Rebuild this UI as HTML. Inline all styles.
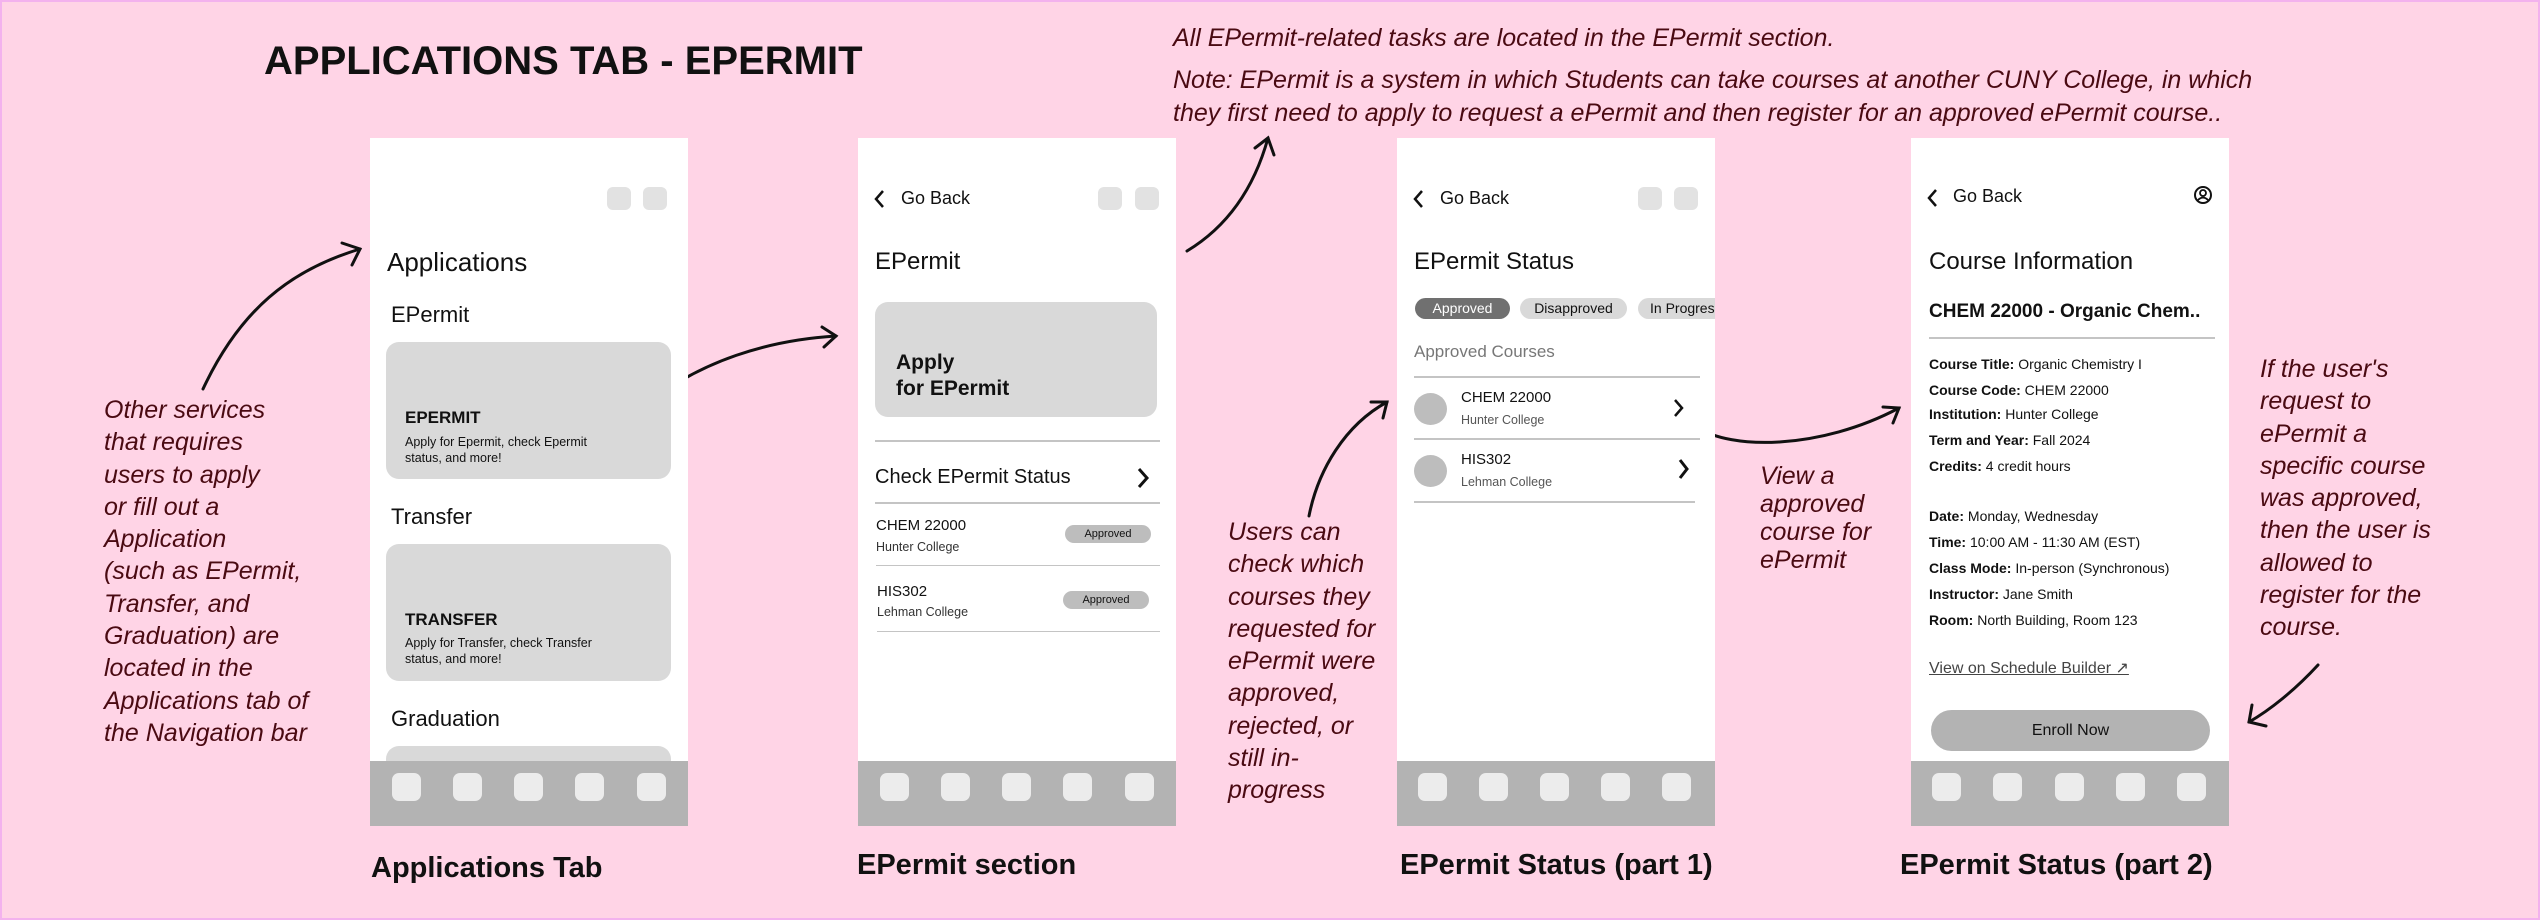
<!DOCTYPE html>
<html><head><meta charset="utf-8"><style>
*{margin:0;padding:0;box-sizing:border-box}
body{width:2540px;height:920px;background:#ffd4e6;position:relative;overflow:hidden;font-family:"Liberation Sans",sans-serif;color:#111;border:2px solid #f3b2ee}
.a{position:absolute;white-space:nowrap}
.note{position:absolute;font-family:"Liberation Sans Narrow","Liberation Sans",sans-serif;font-style:italic;color:#4a0a12;font-size:25px;line-height:32.3px;white-space:nowrap}
.ph{position:absolute;top:136px;width:318px;height:688px;background:#fff;overflow:hidden}
.nav{position:absolute;left:0;bottom:0;width:100%;height:65px;background:#b3b3b3}
.nav i{position:absolute;top:12px;width:29px;height:28px;background:#ececec;border-radius:7px}
.sq{position:absolute;top:49px;width:24px;height:23px;background:#e2e2e2;border-radius:6px}
.card{position:absolute;background:#d9d9d9;border-radius:13px}
.hr{position:absolute;height:2px;background:#c4c4c4}
.pill{position:absolute;background:#bdbdbd;border-radius:10px;font-size:11px;text-align:center;line-height:18px}
.cap{position:absolute;top:850px;font-size:29px;font-weight:700}
.chev{position:absolute}
.d{position:absolute;left:18px;font-size:14px}
.d b{font-weight:600}
</style></head><body>
<div class="a" style="left:262px;top:37px;font-size:40px;font-weight:700">APPLICATIONS TAB - EPERMIT</div>

<div class="note" style="left:1171px;top:20px">All EPermit-related tasks are located in the EPermit section.</div>
<div class="note" style="left:1171px;top:62px;line-height:33px">Note: EPermit is a system in which Students can take courses at another CUNY College, in which<br>they first need to apply to request a ePermit and then register for an approved ePermit course..</div>

<div class="note" style="left:102px;top:392px">Other services<br>that requires<br>users to apply<br>or fill out a<br>Application<br>(such as EPermit,<br>Transfer, and<br>Graduation) are<br>located in the<br>Applications tab of<br>the Navigation bar</div>
<div class="note" style="left:1226px;top:514px">Users can<br>check which<br>courses they<br>requested for<br>ePermit were<br>approved,<br>rejected, or<br>still in-<br>progress</div>
<div class="note" style="left:1758px;top:460px;line-height:28px">View a<br>approved<br>course for<br>ePermit</div>
<div class="note" style="left:2258px;top:351px">If the user's<br>request to<br>ePermit a<br>specific course<br>was approved,<br>then the user is<br>allowed to<br>register for the<br>course.</div>

<svg class="a" style="left:-2px;top:-2px" width="2540" height="920" fill="none" stroke="#111" stroke-width="3" stroke-linecap="round">
<path d="M203 389 C240 310 290 270 360 249"/><path d="M342 243 L360 249 L352 265"/>
<path d="M643 407 C700 360 770 340 836 336"/><path d="M822 327 L836 336 L824 347"/>
<path d="M1187 251 C1230 225 1255 185 1268 138"/><path d="M1255 148 L1268 138 L1274 155"/>
<path d="M1309 516 C1318 470 1345 425 1387 402"/><path d="M1371 402 L1387 402 L1383 418"/>
<path d="M1697 427 C1730 450 1820 450 1899 408"/><path d="M1883 407 L1899 408 L1893 423"/>
<path d="M2318 665 C2295 690 2270 710 2249 722"/><path d="M2252 705 L2249 722 L2266 726"/>
</svg>

<!-- Phone 1 -->
<div class="ph" style="left:368px">
<div class="sq" style="left:237px"></div><div class="sq" style="left:273px"></div>
<div class="a" style="left:17px;top:109px;font-size:26px;font-weight:500">Applications</div>
<div class="a" style="left:21px;top:164px;font-size:22px;font-weight:500">EPermit</div>
<div class="card" style="left:16px;top:204px;width:285px;height:137px"></div>
<div class="a" style="left:35px;top:270px;font-size:17px;font-weight:600">EPERMIT</div>
<div class="a" style="left:35px;top:296px;font-size:12.5px;line-height:16px">Apply for Epermit, check Epermit<br>status, and more!</div>
<div class="a" style="left:21px;top:366px;font-size:22px;font-weight:500">Transfer</div>
<div class="card" style="left:16px;top:406px;width:285px;height:137px"></div>
<div class="a" style="left:35px;top:472px;font-size:17px;font-weight:600">TRANSFER</div>
<div class="a" style="left:35px;top:497px;font-size:12.5px;line-height:16px">Apply for Transfer, check Transfer<br>status, and more!</div>
<div class="a" style="left:21px;top:568px;font-size:22px;font-weight:500">Graduation</div>
<div class="card" style="left:16px;top:608px;width:285px;height:60px"></div>
<div class="nav"><i style="left:22px"></i><i style="left:83px"></i><i style="left:144px"></i><i style="left:205px"></i><i style="left:267px"></i></div>
</div>
<div class="cap" style="left:369px">Applications Tab</div>

<!-- Phone 2 -->
<div class="ph" style="left:856px">
<svg class="chev" style="left:15px;top:50px" width="14" height="22"><path d="M10 3 L3 11 L10 19" stroke="#111" stroke-width="2.5" fill="none"/></svg>
<div class="a" style="left:43px;top:50px;font-size:18px;font-weight:500">Go Back</div>
<div class="sq" style="left:240px"></div><div class="sq" style="left:277px"></div>
<div class="a" style="left:17px;top:110px;font-size:24px;font-weight:500">EPermit</div>
<div class="card" style="left:17px;top:164px;width:282px;height:115px"></div>
<div class="a" style="left:38px;top:212px;font-size:21px;font-weight:700;line-height:26px">Apply<br>for EPermit</div>
<div class="hr" style="left:17px;top:302px;width:285px"></div>
<div class="a" style="left:17px;top:328px;font-size:20px;font-weight:500">Check EPermit Status</div>
<svg class="chev" style="left:277px;top:328px" width="16" height="24"><path d="M4 3 L12 12 L4 21" stroke="#111" stroke-width="3" fill="none"/></svg>
<div class="hr" style="left:17px;top:364px;width:285px"></div>
<div class="a" style="left:18px;top:379px;font-size:15px">CHEM 22000</div>
<div class="a" style="left:18px;top:402px;font-size:12.5px;color:#333">Hunter College</div>
<div class="pill" style="left:207px;top:387px;width:86px">Approved</div>
<div class="hr" style="left:18px;top:427px;width:284px;height:1px"></div>
<div class="a" style="left:19px;top:445px;font-size:15px">HIS302</div>
<div class="a" style="left:19px;top:467px;font-size:12.5px;color:#333">Lehman College</div>
<div class="pill" style="left:205px;top:453px;width:86px">Approved</div>
<div class="hr" style="left:19px;top:493px;width:283px;height:1px"></div>
<div class="nav"><i style="left:22px"></i><i style="left:83px"></i><i style="left:144px"></i><i style="left:205px"></i><i style="left:267px"></i></div>
</div>
<div class="cap" style="left:855px;top:847px">EPermit section</div>

<!-- Phone 3 -->
<div class="ph" style="left:1395px">
<svg class="chev" style="left:15px;top:50px" width="14" height="22"><path d="M10 3 L3 11 L10 19" stroke="#111" stroke-width="2.5" fill="none"/></svg>
<div class="a" style="left:43px;top:50px;font-size:18px;font-weight:500">Go Back</div>
<div class="sq" style="left:241px"></div><div class="sq" style="left:277px"></div>
<div class="a" style="left:17px;top:110px;font-size:24px;font-weight:500">EPermit Status</div>
<div class="a" style="left:18px;top:160px;width:95px;height:21px;border-radius:11px;background:#707070;color:#fff;font-size:14px;text-align:center;line-height:21px">Approved</div>
<div class="a" style="left:123px;top:160px;width:107px;height:21px;border-radius:11px;background:#d9d9d9;font-size:14px;text-align:center;line-height:21px">Disapproved</div>
<div class="a" style="left:241px;top:160px;width:100px;height:21px;border-radius:11px;background:#d9d9d9;font-size:14px;line-height:21px;padding-left:12px">In Progress</div>
<div class="a" style="left:17px;top:204px;font-size:17px;color:#777">Approved Courses</div>
<div class="hr" style="left:17px;top:238px;width:286px"></div>
<div class="a" style="left:17px;top:255px;width:33px;height:32px;border-radius:50%;background:#bdbdbd"></div>
<div class="a" style="left:64px;top:251px;font-size:15px">CHEM 22000</div>
<div class="a" style="left:64px;top:275px;font-size:12.5px;color:#555">Hunter College</div>
<svg class="chev" style="left:274px;top:259px" width="14" height="22"><path d="M4 3 L11 11 L4 19" stroke="#111" stroke-width="2.5" fill="none"/></svg>
<div class="hr" style="left:17px;top:300px;width:286px"></div>
<div class="a" style="left:17px;top:317px;width:33px;height:32px;border-radius:50%;background:#bdbdbd"></div>
<div class="a" style="left:64px;top:313px;font-size:15px">HIS302</div>
<div class="a" style="left:64px;top:337px;font-size:12.5px;color:#555">Lehman College</div>
<svg class="chev" style="left:279px;top:319px" width="14" height="24"><path d="M4 3 L11 12 L4 21" stroke="#111" stroke-width="3" fill="none"/></svg>
<div class="hr" style="left:17px;top:363px;width:281px"></div>
<div class="nav"><i style="left:21px"></i><i style="left:82px"></i><i style="left:143px"></i><i style="left:204px"></i><i style="left:265px"></i></div>
</div>
<div class="cap" style="left:1398px;top:847px">EPermit Status (part 1)</div>

<!-- Phone 4 -->
<div class="ph" style="left:1909px">
<svg class="chev" style="left:15px;top:49px" width="14" height="22"><path d="M10 3 L3 11 L10 19" stroke="#111" stroke-width="2.5" fill="none"/></svg>
<div class="a" style="left:42px;top:48px;font-size:18px;font-weight:500">Go Back</div>
<svg class="a" style="left:282px;top:47px" width="20" height="20"><circle cx="10" cy="10" r="8" stroke="#111" stroke-width="2" fill="none"/><circle cx="10" cy="8" r="3" stroke="#111" stroke-width="1.8" fill="none"/><path d="M5 15 Q10 10 15 15" stroke="#111" stroke-width="1.8" fill="none"/></svg>
<div class="a" style="left:18px;top:110px;font-size:24px;font-weight:500">Course Information</div>
<div class="a" style="left:18px;top:163px;font-size:19px;font-weight:700">CHEM 22000 - Organic Chem..</div>
<div class="hr" style="left:18px;top:199px;width:286px"></div>
<div class="d" style="top:218px"><b>Course Title:</b> Organic Chemistry I</div>
<div class="d" style="top:244px"><b>Course Code:</b> CHEM 22000</div>
<div class="d" style="top:268px"><b>Institution:</b> Hunter College</div>
<div class="d" style="top:294px"><b>Term and Year:</b> Fall 2024</div>
<div class="d" style="top:320px"><b>Credits:</b> 4 credit hours</div>
<div class="d" style="top:370px"><b>Date:</b> Monday, Wednesday</div>
<div class="d" style="top:396px"><b>Time:</b> 10:00 AM - 11:30 AM (EST)</div>
<div class="d" style="top:422px"><b>Class Mode:</b> In-person (Synchronous)</div>
<div class="d" style="top:448px"><b>Instructor:</b> Jane Smith</div>
<div class="d" style="top:474px"><b>Room:</b> North Building, Room 123</div>
<div class="a" style="left:18px;top:520px;font-size:16px;font-weight:500;color:#444;text-decoration:underline">View on Schedule Builder ↗</div>
<div class="a" style="left:20px;top:572px;width:279px;height:41px;border-radius:21px;background:#b3b3b3;font-size:16px;font-weight:500;text-align:center;line-height:41px">Enroll Now</div>
<div class="nav"><i style="left:21px"></i><i style="left:82px"></i><i style="left:144px"></i><i style="left:205px"></i><i style="left:266px"></i></div>
</div>
<div class="cap" style="left:1898px;top:847px">EPermit Status (part 2)</div>
</body></html>
